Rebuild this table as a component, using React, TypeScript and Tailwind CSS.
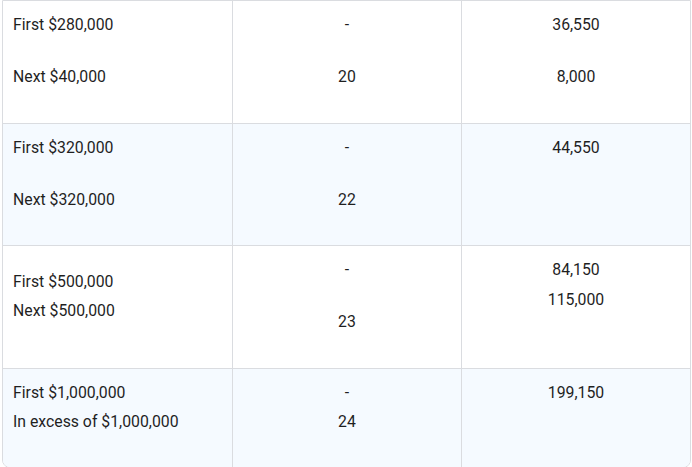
type Line = { text: string; mt?: number };
type Cell = { pt: number; lines: Line[] };
type Row = { h: string; bg: string; cells: Cell[] };

const rows: Row[] = [
  {
    h: 'h-[123px]',
    bg: 'bg-white',
    cells: [
      { pt: 12, lines: [{ text: 'First $280,000' }, { text: 'Next $40,000', mt: 28 }] },
      { pt: 12, lines: [{ text: '-' }, { text: '20', mt: 28 }] },
      { pt: 12, lines: [{ text: '36,550' }, { text: '8,000', mt: 28 }] },
    ],
  },
  {
    h: 'h-[122px]',
    bg: 'bg-[#f5faff]',
    cells: [
      { pt: 12, lines: [{ text: 'First $320,000' }, { text: 'Next $320,000', mt: 28 }] },
      { pt: 12, lines: [{ text: '-' }, { text: '22', mt: 28 }] },
      { pt: 12, lines: [{ text: '44,550' }] },
    ],
  },
  {
    h: 'h-[123px]',
    bg: 'bg-white',
    cells: [
      { pt: 24, lines: [{ text: 'First $500,000' }, { text: 'Next $500,000', mt: 5 }] },
      { pt: 12, lines: [{ text: '-' }, { text: '23', mt: 28 }] },
      { pt: 12, lines: [{ text: '84,150' }, { text: '115,000', mt: 6 }] },
    ],
  },
  {
    h: 'flex-1',
    bg: 'bg-[#f5faff]',
    cells: [
      { pt: 12, lines: [{ text: 'First $1,000,000' }, { text: 'In excess of $1,000,000', mt: 5 }] },
      { pt: 12, lines: [{ text: '-' }, { text: '24', mt: 5 }] },
      { pt: 12, lines: [{ text: '199,150' }] },
    ],
  },
];

export default function App() {
  return (
    <div className="h-[467px] w-[692px] overflow-hidden bg-white pl-[2px] font-['Roboto',sans-serif] text-[15.8px] text-[#1f1f1f]">
      <div className="flex h-[468px] w-[689px] flex-col overflow-hidden rounded-b-lg border border-[#dadce0]">
        {rows.map((row, i) => (
          <div
            key={i}
            className={`grid grid-cols-[230px_229px_1fr] ${row.h} ${row.bg} ${i < rows.length - 1 ? 'border-b border-[#dadce0]' : ''}`}
          >
            {row.cells.map((cell, j) => (
              <div
                key={j}
                style={{ paddingTop: cell.pt }}
                className={`flex flex-col leading-6 ${j === 0 ? 'items-start pl-[10px]' : 'items-center'} ${j < 2 ? 'border-r border-[#dadce0]' : ''}`}
              >
                {cell.lines.map((line, k) => (
                  <span key={k} style={{ marginTop: line.mt ?? 0 }}>
                    {line.text}
                  </span>
                ))}
              </div>
            ))}
          </div>
        ))}
      </div>
    </div>
  );
}
